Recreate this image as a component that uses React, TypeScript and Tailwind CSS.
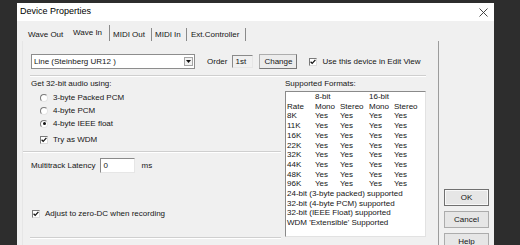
import React from "react";

const Check = ({ checked = true }: { checked?: boolean }) => (
  <span className="w-[8px] h-[8px] bg-white border border-t-[#7a7a7a] border-l-[#7a7a7a] border-r-[#dcdcdc] border-b-[#dcdcdc] flex items-center justify-center shrink-0">
    {checked && (
      <svg width="6" height="6" viewBox="0 0 6 6">
        <path d="M0.6 2.8 L2.2 4.4 L5.4 0.9" stroke="#111" strokeWidth="1.3" fill="none" />
      </svg>
    )}
  </span>
);

const Radio = ({ on = false }: { on?: boolean }) => (
  <span className="w-[8px] h-[8px] rounded-full bg-white border border-t-[#7a7a7a] border-l-[#7a7a7a] border-r-[#e4e4e4] border-b-[#e4e4e4] flex items-center justify-center shrink-0">
    {on && <span className="w-[3px] h-[3px] rounded-full bg-[#111]" />}
  </span>
);

const Sep = ({ className = "" }: { className?: string }) => (
  <div className={`border-t border-t-[#cfcfcf] border-b border-b-white ${className}`} />
);

const rates = ["8K", "11K", "16K", "22K", "32K", "44K", "48K", "96K"];

export default function App() {
  return (
    <div className="w-[520px] h-[245px] overflow-hidden bg-[#2d2d2d] pt-[3px] pl-[17px] font-['Liberation_Sans',Arial,sans-serif] text-[8px] text-[#151515]">
      <div className="w-[477px] h-[260px] bg-[#f0f0f0] flex flex-col">
        {/* Title bar */}
        <div className="h-[18px] bg-white flex items-center justify-between pl-[3px] pr-[6px] shrink-0">
          <span className="text-[9px] text-black">Device Properties</span>
          <svg width="9" height="9" viewBox="0 0 9 9">
            <path d="M0.5 0.5 L8.5 8.5 M8.5 0.5 L0.5 8.5" stroke="#333" strokeWidth="0.9" />
          </svg>
        </div>

        <div className="flex flex-row pl-[5px] pt-[4px]">
          {/* Tab control */}
          <div className="w-[417px] flex flex-col">
            <div className="h-[16px] flex items-end">
              <div className="w-[46px] h-[13px] pl-[6px] flex items-center">Wave Out</div>
              <div className="w-[42px] h-[16px] pl-[5px] pb-[1px] flex items-center border-r border-r-[#8a8a8a]">Wave In</div>
              <div className="w-[42px] h-[13px] pl-[3px] flex items-center border-r border-r-[#8a8a8a]">MIDI Out</div>
              <div className="w-[35px] h-[13px] pl-[3px] flex items-center border-r border-r-[#8a8a8a]">MIDI In</div>
              <div className="w-[59px] h-[13px] pl-[4px] flex items-center border-r border-r-[#8a8a8a]">Ext.Controller</div>
            </div>

            <div className="h-[210px] border-r border-r-[#9c9c9c] border-l border-l-[#e6e6e6] pl-[8px] pr-[12px] pt-[13px]">
              {/* Device row */}
              <div className="h-[15px] flex items-center">
                <div className="w-[164px] h-[15px] bg-white border border-[#8d8d8d] flex items-center justify-between pl-[2px] pr-[1px]">
                  <span>Line (Steinberg UR12 )</span>
                  <span className="w-[9px] h-[9px] border border-[#a5a5a5] bg-[#f2f2f2] flex items-center justify-center">
                    <svg width="5" height="3" viewBox="0 0 5 3">
                      <path d="M0 0 H5 L2.5 3 Z" fill="#111" />
                    </svg>
                  </span>
                </div>
                <span className="ml-[12px]">Order</span>
                <div className="ml-[5px] w-[21px] h-[13px] border border-t-[#8a8a8a] border-l-[#8a8a8a] border-r-[#e6e6e6] border-b-[#e6e6e6] flex items-center pl-[2px]">
                  1st
                </div>
                <div className="ml-[6px] w-[38px] h-[15px] border border-[#adadad] border-r-[#777] border-b-[#777] bg-[#ececec] flex items-center justify-center">
                  Change
                </div>
                <div className="ml-[12px] flex items-center gap-[5px]">
                  <Check />
                  <span>Use this device in Edit View</span>
                </div>
              </div>

              <Sep className="mt-[6px] -ml-[1px]" />

              <div className="flex flex-row">
                {/* Left column */}
                <div className="w-[250px] flex flex-col">
                  <div className="h-[14px] flex items-center">Get 32-bit audio using:</div>
                  <div className="h-[13px] flex items-center gap-[5px] pl-[9px]">
                    <Radio />
                    <span>3-byte Packed PCM</span>
                  </div>
                  <div className="h-[13px] flex items-center gap-[5px] pl-[9px]">
                    <Radio />
                    <span>4-byte PCM</span>
                  </div>
                  <div className="h-[13px] flex items-center gap-[5px] pl-[9px]">
                    <Radio on />
                    <span>4-byte IEEE float</span>
                  </div>
                  <div className="mt-[3px] h-[14px] flex items-center gap-[5px] pl-[9px]">
                    <Check />
                    <span>Try as WDM</span>
                  </div>

                  <Sep className="mt-[4px] -ml-[8px]" />

                  <div className="mt-[5px] h-[15px] flex items-center">
                    <span>Multitrack Latency</span>
                    <div className="ml-[5px] w-[35px] h-[15px] bg-white border border-t-[#8a8a8a] border-l-[#8a8a8a] border-r-[#e6e6e6] border-b-[#e6e6e6] flex items-center pl-[2px]">
                      0
                    </div>
                    <span className="ml-[6px]">ms</span>
                  </div>

                  <div className="mt-[34px] h-[14px] flex items-center gap-[5px] pl-[1px]">
                    <Check />
                    <span>Adjust to zero-DC when recording</span>
                  </div>

                  <Sep className="mt-[16px] -ml-[1px]" />
                </div>

                {/* Right column */}
                <div className="ml-[4px] w-[141px] flex flex-col">
                  <div className="h-[14px] flex items-center">Supported Formats:</div>
                  <div className="h-[146px] bg-white border border-t-[#8a8a8a] border-l-[#8a8a8a] border-r-[#e2e2e2] border-b-[#e2e2e2] pl-[1px] leading-[9.7px]">
                    <div className="grid grid-cols-[28px_25px_29px_25px_1fr]">
                      <span />
                      <span className="col-span-2">8-bit</span>
                      <span className="col-span-2">16-bit</span>
                      <span>Rate</span>
                      <span>Mono</span>
                      <span>Stereo</span>
                      <span>Mono</span>
                      <span>Stereo</span>
                      {rates.map((r) => (
                        <React.Fragment key={r}>
                          <span>{r}</span>
                          <span>Yes</span>
                          <span>Yes</span>
                          <span>Yes</span>
                          <span>Yes</span>
                        </React.Fragment>
                      ))}
                    </div>
                    <div>24-bit (3-byte packed) supported</div>
                    <div>32-bit (4-byte PCM) supported</div>
                    <div>32-bit (IEEE Float) supported</div>
                    <div>WDM 'Extensible' Supported</div>
                  </div>
                </div>
              </div>
            </div>
          </div>

          {/* Buttons */}
          <div className="ml-[5px] mt-[164px] w-[45px] flex flex-col gap-[5px]">
            <div className="h-[17px] border border-[#707070] bg-[#e6e6e6] flex items-center justify-center">
              <div className="w-full h-full border border-[#f8f8f8] flex items-center justify-center">OK</div>
            </div>
            <div className="h-[17px] border border-[#acacac] bg-[#e6e6e6] flex items-center justify-center">Cancel</div>
            <div className="h-[17px] border border-[#acacac] bg-[#e6e6e6] flex items-center justify-center">Help</div>
          </div>
        </div>
      </div>
    </div>
  );
}
